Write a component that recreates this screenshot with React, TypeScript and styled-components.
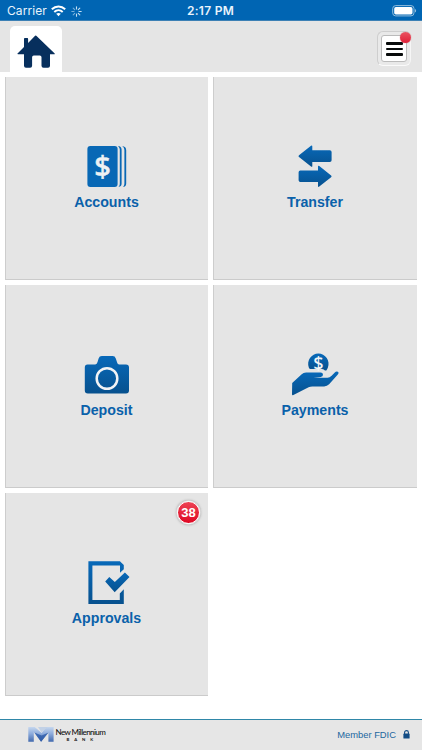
import React from "react";
import styled, { createGlobalStyle } from "styled-components";

const GlobalStyle = createGlobalStyle`
  * { box-sizing: border-box; }
  body { margin: 0; background: #fff; font-family: "Liberation Sans", Arial, sans-serif; }
`;

const Screen = styled.div`
  width: 422px;
  height: 750px;
  display: flex;
  flex-direction: column;
  background: #fff;
  overflow: hidden;
`;

const StatusBar = styled.div`
  height: 21px;
  flex: none;
  display: grid;
  grid-template-columns: 1fr auto 1fr;
  align-items: center;
  background: #0065b3;
  border-bottom: 1px solid #3c80b5;
  color: #e9f4fc;
  font-family: Inter, sans-serif;
  font-size: 12px;
  line-height: 20px;
`;

const Carrier = styled.div`
  display: flex;
  align-items: center;
  padding: 1px 0 0 7px;
  letter-spacing: 0.08px;
  svg { display: block; margin-left: 4.5px; }
`;

const Time = styled.div`
  padding: 1px 1px 0 0;
  font-weight: 600;
  font-size: 12px;
  letter-spacing: 0.28px;
`;

const Battery = styled.div`
  display: flex;
  justify-content: flex-end;
  padding-right: 5px;
`;

const Header = styled.header`
  height: 51px;
  flex: none;
  display: flex;
  justify-content: space-between;
  padding: 5px 11px 0 10px;
  background: #e5e5e5;
`;

const HomeTab = styled.button`
  display: flex;
  align-items: flex-start;
  width: 51.5px;
  height: 46px;
  padding: 9px 0 0 7px;
  border: 0;
  border-radius: 5px 5px 0 0;
  background: #fff;
  svg { display: block; flex: none; }
`;

const MenuButton = styled.button`
  position: relative;
  width: 34px;
  height: 35px;
  margin-top: 5px;
  padding: 3px;
  border: 1px solid #cecece;
  border-right-color: #f6f6f6;
  border-bottom-color: #fafafa;
  border-radius: 6px;
  background: #e9e9e9;
`;

const MenuFace = styled.span`
  display: flex;
  flex-direction: column;
  align-items: center;
  gap: 3px;
  width: 26px;
  height: 27px;
  padding-top: 6px;
  border: 1px solid #bbb;
  border-radius: 3px;
  background: #fff;
`;

const MenuLine = styled.span`
  width: 17px;
  height: 2.5px;
  border-radius: 1px;
  background: #080b0b;
`;

const MenuDot = styled.span`
  position: absolute;
  top: 0;
  right: -1px;
  width: 11px;
  height: 11px;
  border-radius: 50%;
  background: linear-gradient(#ea5361, #df2037);
  box-shadow: 0 0 1px #b84550;
`;

const Tiles = styled.main`
  flex: 1;
  display: grid;
  grid-template-columns: 203px 204px;
  grid-auto-rows: 203px;
  gap: 5px;
  padding: 5px;
`;

const Tile = styled.button`
  position: relative;
  display: flex;
  flex-direction: column;
  align-items: center;
  padding: 66px 0 0;
  border: 0;
  background: #e5e5e5;
  box-shadow: inset 1px 0 #cdcdcd, inset 0 -1px #cbcbcb;
  font-family: inherit;
  svg { display: block; }
`;

const Label = styled.span`
  margin-top: 3px;
  color: #0a61aa;
  font-size: 14.2px;
  line-height: 17px;
  font-weight: 700;
`;

const Badge = styled.span`
  position: absolute;
  top: 8px;
  right: 8px;
  width: 23px;
  height: 23px;
  border: 1.5px solid #fff;
  border-radius: 50%;
  background: linear-gradient(#ed4354, #df0824);
  box-shadow: 0 0 0 0.5px #eee, 0 0 3px #777;
  color: #fff;
  font-size: 13px;
  line-height: 21px;
  font-weight: 700;
  text-align: center;
`;

const Footer = styled.footer`
  height: 31px;
  flex: none;
  display: flex;
  align-items: center;
  justify-content: space-between;
  padding: 0 12px 1px 28px;
  border-top: 1px solid #2f87a8;
  background: #e6e6e6;
`;

const Brand = styled.div`
  display: flex;
  align-items: flex-start;
  svg { display: block; margin-top: 1px; }
`;

const BrandText = styled.div`
  display: flex;
  flex-direction: column;
  margin-left: 0.5px;
  padding-top: 2px;
  color: #111;
  font-family: Lato, sans-serif;
`;

const BrandName = styled.span`
  font-size: 8px;
  line-height: 9px;
  font-weight: 500;
  letter-spacing: -0.57px;
  white-space: nowrap;
`;

const BrandSub = styled.span`
  padding-left: 11px;
  font-size: 4.3px;
  line-height: 5px;
  font-weight: 700;
  letter-spacing: 4.9px;
`;

const Member = styled.div`
  display: flex;
  align-items: center;
  gap: 7px;
  padding-bottom: 1px;
  color: #22679f;
  font-size: 9.4px;
`;

const spokes = [0, 45, 90, 135, 180, 225, 270, 315];

const WifiIcon = () => (
  <svg width="15" height="12" viewBox="0 0 15 12" fill="none" stroke="#fff" strokeWidth="2">
    <path d="M.8 4.2C4.7.5 10.3.5 14.2 4.2M3.3 6.9c2.4-2.2 6-2.2 8.4 0" />
    <path d="M7.5 11.2 5.2 8.8c1.3-1.2 3.3-1.2 4.6 0Z" fill="#fff" stroke="none" />
  </svg>
);

const SpinnerIcon = () => (
  <svg width="11" height="11" viewBox="-5.5 -5.5 11 11" stroke="#d9edfa" strokeWidth="1.1" strokeLinecap="round">
    {spokes.map((a) => (
      <path key={a} d="M0-2.5V-4.7" transform={`rotate(${a})`} opacity={a > 180 ? 0.55 : 0.9} />
    ))}
  </svg>
);

const BatteryIcon = () => (
  <svg width="25" height="12" viewBox="0 0 25 12">
    <rect x=".7" y=".6" width="21.3" height="10.3" rx="3" fill="none" stroke="#91bddd" />
    <rect x="2.2" y="2.1" width="18.3" height="7.3" rx="1.6" fill="#fff" />
    <path d="M23 4v3.5c1.5-.6 1.5-2.9 0-3.5" fill="#91bddd" />
  </svg>
);

const HomeIcon = () => (
  <svg width="38" height="34" viewBox="17 35 38 34" fill="#072f5d">
    <path d="M17.5 53.4 24 47v-8.2q0-.8.8-.8h2.6q.7 0 .7.8V43l6.5-6.8q1.1-1.2 2.2 0l17.9 17.4q.4.6-.5.6H50v11.6q0 2-2 2h-4.5q-2 0-2-2v-8.6q0-1.7-1.7-1.7h-6q-1.7 0-1.7 1.7v8.6q0 2-2 2H26q-2 0-2-2V54.2h-6q-1 0-.5-.8Z" />
  </svg>
);

const Gradient = ({ id }: { id: string }) => (
  <defs>
    <linearGradient id={id} x2="0" y2="1">
      <stop stopColor="#0869b9" />
      <stop offset="1" stopColor="#07518e" />
    </linearGradient>
  </defs>
);

const AccountsIcon = () => (
  <svg width="61" height="48" viewBox="76 143 61 48" fill="#0868b5">
    <rect x="87.4" y="146" width="30.2" height="41" rx="3" />
    <path d="M117.8 146c2.5.1 3.8 1.5 3.8 3.8v33.8c0 2.1-1 3.2-3.2 3.4 1-1 1.4-1.8 1.4-3.5v-33.7c0-1.7-.7-2.8-2-3.8ZM122 146c2.9.2 4.2 1.7 4.2 4.2v33.2c0 2.3-1.1 3.4-3.4 3.6 1.1-.9 1.6-2 1.6-3.6v-33.2c0-1.9-.8-3.1-2.4-4.2Z" />
    <text x="102.6" y="177" textAnchor="middle" fill="#eef1f3" stroke="#eef1f3" strokeWidth=".5" fontFamily="Noto Sans, sans-serif" fontSize="29" fontWeight="500">$</text>
  </svg>
);

const TransferIcon = () => (
  <svg width="61" height="48" viewBox="285 143 61 48">
    <Gradient id="transfer" />
    <path fill="url(#transfer)" d="M299 155.3 311 145.8q1.3-.9 1.3.7v3.8h17.5q1.8 0 1.8 1.8v8.2q0 1.7-1.8 1.7h-17.5v4q0 1.4-1.3.5L299 157q-1.1-.8 0-1.7Z" />
    <path fill="url(#transfer)" d="M331.1 175.5 319.3 166q-1.3-.9-1.3.7v3.7h-17.7q-1.7 0-1.7 1.8v8.1q0 1.8 1.7 1.8H318v4q0 1.5 1.3.5l11.8-9.4q1.1-.9 0-1.7Z" />
  </svg>
);

const CameraIcon = () => (
  <svg width="61" height="48" viewBox="76 351 61 48" fill="url(#camera)">
    <Gradient id="camera" />
    <path d="M87.5 364.5H95c1.6 0 2-1 2.7-3l.9-3q.8-2.4 3.2-2.4h10.8q2.4 0 3.2 2.4l1 3c.6 2 1 3 2.6 3h6.6q3 0 3 3v23q0 3-3 3H87.8q-3 0-3-3v-23q0-3 2.7-3Z" />
    <circle cx="107" cy="378.5" r="10.3" fill="none" stroke="#f1f3f5" strokeWidth="2.5" />
  </svg>
);

const PaymentsIcon = () => (
  <svg width="61" height="48" viewBox="285 351 61 48" fill="url(#payments)">
    <Gradient id="payments" />
    <path d="M308.8 367.4a10.2 10.2 0 1 1 19.1 0q-.5 1.7-1.6 3h-1.4q-.8-1.5-2.9-1.5h-11.7q-.8 0-1.5-1.5Z" />
    <path d="m292.2 383 9.2-8.6q2-1.9 4.7-1.9h14.5q2.4 0 2.4 2.2 0 2-2.3 2.2l-7.3.8h14.2q2 0 4-2l3.2-3.3q1.5-1.4 3-.6 1.6.9-.2 3l-8.5 9.5q-2 2.1-5 2.1h-11.8q-2 0-3.7.8l-15.2 7.9q-1.4.8-1.4-1Z" />
    <text x="318.5" y="369.8" textAnchor="middle" fill="#f2f5f7" fontFamily="Noto Sans, sans-serif" fontSize="18" fontWeight="500">$</text>
  </svg>
);

const ApprovalsIcon = () => (
  <svg width="61" height="48" viewBox="76 559 61 48" fill="url(#approvals)">
    <Gradient id="approvals" />
    <path d="M88.4 561.3h31.5l3.9 3.8v4.1l-3.8 3.6v-7.4H92.4v34.5h27.4v-6.5l4-4.2v14.7H88.4Z" />
    <path d="m105.2 581.5 4.1-4.4 5.5 5 10.1-9.6 4.6 4.5-14.8 15.2Z" />
  </svg>
);

const BrandMark = () => (
  <svg width="27" height="16" viewBox="0 0 27 16">
    <defs>
      <linearGradient id="brand" x2="0" y2="1">
        <stop stopColor="#c6d7ee" />
        <stop offset=".45" stopColor="#8eacdc" />
        <stop offset="1" stopColor="#4169ae" />
      </linearGradient>
    </defs>
    <path d="M.3 0h6.4l7 6L18 0h7.6v14.8h-5.2V5.2L13.2 14.8 5.8 5v9.8H.3Z" fill="url(#brand)" />
    <path d="m10 0 3.5 5.6L19.7 0Z" fill="#c2d1e6" />
    <path d="M6.3 5.6 13 14.8l7.7-9.2-7.1 3Z" fill="#2857a6" opacity=".75" />
  </svg>
);

const LockIcon = () => (
  <svg width="7" height="9" viewBox="0 0 7 9">
    <path d="M1.6 4V2.5a1.9 1.9 0 0 1 3.8 0V4" fill="none" stroke="#124c85" strokeWidth="1.1" />
    <rect x=".4" y="3.6" width="6.2" height="5" rx=".6" fill="#124c85" />
  </svg>
);

const items = [
  { label: "Accounts", Icon: AccountsIcon },
  { label: "Transfer", Icon: TransferIcon },
  { label: "Deposit", Icon: CameraIcon },
  { label: "Payments", Icon: PaymentsIcon },
  { label: "Approvals", Icon: ApprovalsIcon, count: 38 },
];

export default function App() {
  return (
    <Screen>
      <GlobalStyle />
      <StatusBar>
        <Carrier>Carrier<WifiIcon /><SpinnerIcon /></Carrier>
        <Time>2:17 PM</Time>
        <Battery><BatteryIcon /></Battery>
      </StatusBar>
      <Header>
        <HomeTab aria-label="Home"><HomeIcon /></HomeTab>
        <MenuButton aria-label="Menu">
          <MenuFace><MenuLine /><MenuLine /><MenuLine /></MenuFace>
          <MenuDot />
        </MenuButton>
      </Header>
      <Tiles>
        {items.map(({ label, Icon, count }) => (
          <Tile key={label}>
            <Icon />
            <Label>{label}</Label>
            {count && <Badge>{count}</Badge>}
          </Tile>
        ))}
      </Tiles>
      <Footer>
        <Brand>
          <BrandMark />
          <BrandText>
            <BrandName>New Millennium</BrandName>
            <BrandSub>BANK</BrandSub>
          </BrandText>
        </Brand>
        <Member>Member FDIC<LockIcon /></Member>
      </Footer>
    </Screen>
  );
}
